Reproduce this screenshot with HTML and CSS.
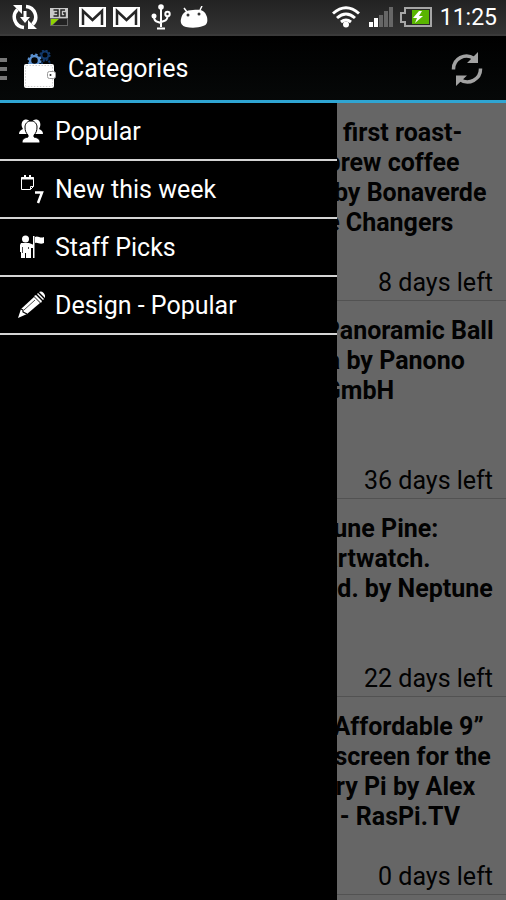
FILE: index.html
```html
<!DOCTYPE html>
<html lang="en">
<head>
<meta charset="utf-8">
<meta name="viewport" content="width=device-width, initial-scale=1">
<title>Categories</title>
<link rel="stylesheet" href="styles.css">
</head>
<body>
<div class="screen">
  <div class="status">
    <div class="notices">
      <svg class="sync" width="28" height="28" viewBox="0 0 28 28" fill="none" stroke="#fff" stroke-width="3.500">
        <path d="M13 24.500A10.500 10.500 0 0 1 6.500 6.500M15 3.500A10.500 10.500 0 0 1 21.500 21.500"/>
        <path d="M2 2h9v9zM26 26h-9v-9z" fill="#fff" stroke="none"/>
        <path d="M12.500 8h3v6H19l-5 6-5-6h3.500z" fill="#fff" stroke="none"/>
      </svg>
      <svg class="net" width="18" height="18" viewBox="0 0 18 18">
        <path d="M0 0h18v10H0z" fill="#c9c9c9"/><path d="M0 10h18v8H0z" fill="#666"/>
        <path d="M1 11h8l-7 6H1z" fill="#8fd400"/><path d="M9 11h8v6H3z" fill="#222"/>
        <path d="M3.500 2H8v6H3.500M4.500 5H8M15 2h-4v6h4V5h-2" fill="none" stroke="#222" stroke-width="1.500"/>
      </svg>
      <svg class="mail" width="27" height="20" viewBox="0 0 27 20">
        <path d="M0 0h27v20H0z" fill="#fff"/><path d="M4 18V4l9.500 9L23 4v14" fill="none" stroke="#262626" stroke-width="2.500"/>
      </svg>
      <svg class="mail" width="27" height="20" viewBox="0 0 27 20">
        <path d="M0 0h27v20H0z" fill="#fff"/><path d="M4 18V4l9.500 9L23 4v14" fill="none" stroke="#262626" stroke-width="2.500"/>
      </svg>
      <svg class="usb" width="20" height="26" viewBox="0 0 20 26" fill="none" stroke="#fff" stroke-width="2">
        <path d="M10 3v20M3 13q0 4 4 5l3 1M16.500 12q0 4-3.500 5l-3 1M6 24.500h8"/>
        <circle cx="10" cy="3" r="2.800" fill="#fff" stroke="none"/><circle cx="3" cy="12" r="2.500" fill="#fff" stroke="none"/><circle cx="16.500" cy="10" r="2.200"/>
      </svg>
      <svg class="droid" width="28" height="22" viewBox="0 0 28 22">
        <path d="M4 2l3 4M22 0l-2 4" stroke="#fff" stroke-width="1.500"/><path d="M1 13C2 7 6 4 13 4c7-1 12 0 14 7 1 5 0 8-4 9-5 2-12 2-17 1-4-1-6-4-5-8z" fill="#fff"/><circle cx="8" cy="9" r="1.500" fill="#333"/><circle cx="19" cy="8" r="1.500" fill="#333"/>
      </svg>
    </div>
    <div class="system">
      <svg class="wifi" width="28" height="22" viewBox="0 0 28 22" fill="none" stroke="#fff" stroke-width="3">
        <path d="M1 7.500Q14-4 27 7.500M5 12q9-8 18 0M9 16q5-4 10 0"/><circle cx="14" cy="18.500" r="3" fill="#fff" stroke="none"/>
      </svg>
      <svg class="signal" width="24" height="20" viewBox="0 0 24 20">
        <path d="M0 15h4v5H0zM5 11h4v9H5z" fill="#fff"/><path d="M10 8h4v12h-4zM15 4h4v16h-4zM20 0h4v20h-4z" fill="#666"/>
      </svg>
      <svg class="battery" width="32" height="20" viewBox="0 0 32 20">
        <path d="M5 1h26v18H5v-4H1V6h4z" fill="#292929" stroke="#a6a6a6" stroke-width="2"/><path d="M12 3h17v14H12z" fill="#59b500"/><path d="M19 4l-6 7h4l-2 5 8-7h-4l3-5z" fill="#fff"/>
      </svg>
      <time>11:25</time>
    </div>
  </div>

  <header class="bar">
    <button class="home" aria-label="Toggle categories">
      <svg class="grip" width="7" height="22" viewBox="0 0 7 22"><path d="M0 0h7v4H0zM0 9h7v4H0zM0 18h7v4H0z" fill="#777"/></svg>
      <svg class="logo" width="32" height="38" viewBox="0 0 32 38">
        <circle cx="21" cy="5" r="3.500" fill="none" stroke="#12396b" stroke-width="2"/>
        <circle cx="21" cy="5" r="4.800" fill="none" stroke="#12396b" stroke-width="1.500" stroke-dasharray="2 1.770"/>
        <circle cx="10.500" cy="10.500" r="4.500" fill="none" stroke="#5b90cf" stroke-width="2.500"/>
        <circle cx="10.500" cy="10.500" r="6" fill="none" stroke="#5b90cf" stroke-width="2" stroke-dasharray="2.400 2.310"/>
        <circle cx="22" cy="14" r="4" fill="none" stroke="#12396b" stroke-width="2" stroke-dasharray="2 1"/>
        <rect x="0" y="14" width="30" height="24" rx="2" fill="#fff"/>
        <rect x="1.500" y="15.500" width="27" height="21" rx="1" fill="none" stroke="#bbb" stroke-dasharray="1.500 1.500" stroke-width=".7"/>
        <rect x="23.500" y="21.500" width="8" height="7" rx="2" fill="#fff" stroke="#999"/><circle cx="26.500" cy="25" r="1" fill="#222"/>
      </svg>
    </button>
    <h1>Categories</h1>
    <button class="refresh" aria-label="Refresh">
      <svg width="32" height="34" viewBox="0 0 32 34">
        <path d="M2.500 17.500A13 13 0 0 1 23 6.500M29.500 16.500A13 13 0 0 1 9 27.500" fill="none" stroke="#a2a2a2" stroke-width="3.500"/><path d="M27 0v11H16zM5 34V23.500h11z" fill="#a2a2a2"/>
      </svg>
    </button>
  </header>

  <div class="content">
    <main class="projects">
      <article><h2>World's first roast-<br>grind-brew coffee<br>machine by Bonaverde<br>Coffee Changers</h2><p>8 days left</p></article>
      <article><h2>Panono: Panoramic Ball<br>Camera by Panono<br>GmbH</h2><p>36 days left</p></article>
      <article><h2>Neptune Pine:<br>Smartwatch.<br>Reinvented. by Neptune</h2><p>22 days left</p></article>
      <article><h2>HDMIPi: Affordable 9”<br>High-Def screen for the<br>Raspberry Pi by Alex<br>Eames - RasPi.TV</h2><p>0 days left</p></article>
    </main>
    <div class="scrim"></div>
    <nav class="drawer">
      <a href="#popular">
        <svg width="28" height="28" viewBox="0 0 28 28" fill="#fff">
          <path d="M7 3c3-1 5 0 6 2-4 1-5 5-3 9l1 3H2c0-3 2-4 4-5-2-3-2-7 1-9zM21 3c-3-1-5 0-6 2 4 1 5 5 3 9l-1 3h9c0-3-2-4-4-5 2-3 2-7-1-9z"/>
          <path d="M14 4c4 0 6 3 6 6 0 4-1 6-3 8v2c4 1 6 2 6 6H5c0-4 2-5 6-6v-2c-2-2-3-4-3-8 0-3 2-6 6-6z" stroke="#000" stroke-width="1"/>
        </svg>Popular</a>
      <a href="#new">
        <svg width="28" height="32" viewBox="0 0 28 32" fill="none" stroke="#fff">
          <path d="M4.500 4.500h12v9l-3 3h-9z"/><path d="M4 5.500h13" stroke-width="2"/><path d="M8 2v4M13 2v4" stroke-width="2"/><path d="M13.500 16.500v-3h3"/><path d="M18 19.500h7l-4 10.500" stroke-width="2.500"/>
        </svg>New this week</a>
      <a href="#staff">
        <svg width="28" height="28" viewBox="0 0 28 28" fill="#fff">
          <circle cx="8.500" cy="6" r="3.500"/><path d="M4 10h8l5 2v3h-3v10H9v-5H8v5H4v-6H3v-7zM16 3h1.500v22H16zM18 4c3-2 5 2 9 0v6c-4 2-6-1-9 0z"/><path d="M5.500 14v6M11.500 14v2" stroke="#000" stroke-width=".7"/>
        </svg>Staff Picks</a>
      <a href="#design">
        <svg width="28" height="32" viewBox="0 0 28 32" fill="#fff">
          <path d="M1 29l3-9L17 8l6 6L10 25z"/><path d="M17 7l2-1 6 6-1 2zM20 5l1-1 6 6-1 1zM22 3c3-2 7 2 6 6z"/><path d="M4 20l2 1v2l2 1 2 1" fill="none" stroke="#000" stroke-width="1.200"/><path d="M7 21l11-10" stroke="#000" stroke-width=".7"/>
        </svg>Design - Popular</a>
    </nav>
  </div>
</div>
</body>
</html>
```
FILE: styles.css
```css
* { box-sizing: border-box; }
body {
  margin: 0;
  background: #000;
  color: #fff;
  font-family: Roboto, "Liberation Sans", sans-serif;
}
svg { display: block; flex: none; }
h1, h2, p { margin: 0; }
button { border: 0; padding: 0; background: none; color: inherit; font: inherit; }
.screen { display: flex; flex-direction: column; height: 100vh; overflow: hidden; }

.status {
  flex: none;
  display: flex;
  justify-content: space-between;
  height: 36px;
  padding: 0 9px 0 11px;
  background: linear-gradient(#222, #333);
  border-bottom: 2px solid #3a3a3a;
}
.notices, .system { display: flex; align-items: center; }
.net { margin-left: 11px; }
.mail { margin-left: 11px; }
.mail + .mail { margin-left: 7px; }
.usb { margin-left: 11px; }
.droid { margin-left: 9px; }
.signal { margin-left: 9px; }
.battery { margin-left: 7px; }
time { margin-left: 8px; font-size: 23px; line-height: 32px; padding-top: 2px; }

.bar {
  flex: none;
  display: flex;
  align-items: center;
  height: 67px;
  padding: 2px 23px 0 0;
  background: linear-gradient(#000, #060808);
  border-bottom: 3px solid #2fa5d3;
}
.home { display: flex; align-items: center; gap: 17px; }
.bar h1 { margin-left: 12px; font-size: 25px; line-height: 30px; font-weight: 400; }
.refresh { margin-left: auto; }

.content { position: relative; flex: 1; min-height: 0; overflow: hidden; }
.projects { min-height: 100%; background: #fff; color: #050505; }
article {
  display: flex;
  flex-direction: column;
  justify-content: space-between;
  height: 198px;
  padding: 15px 13px 2px 225px;
  border-bottom: 1px solid #ccc;
}
h2 {
  font-size: 25px;
  line-height: 30px;
  font-weight: 700;
  text-align: center;
  white-space: nowrap;
}
article p { font-size: 25px; line-height: 30px; text-align: right; }
.scrim { position: absolute; inset: 0; background: rgba(0, 0, 0, 0.6); }

.drawer {
  position: absolute;
  top: 0;
  bottom: 0;
  left: 0;
  width: 66.6%;
  background: #000;
}
.drawer a {
  display: flex;
  align-items: center;
  gap: 10px;
  height: 58px;
  padding-left: 17px;
  border-bottom: 2px solid #d4d4d4;
  color: #fff;
  font-size: 25px;
  text-decoration: none;
}
```
